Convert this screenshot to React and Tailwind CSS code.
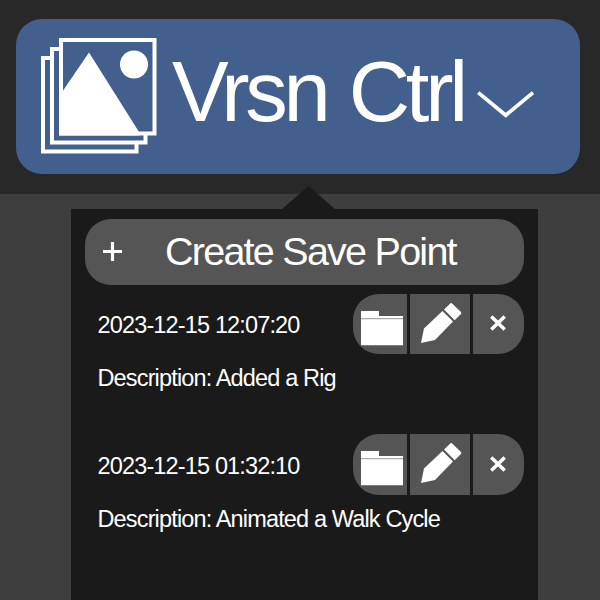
import React from "react";

const savePoints = [
  { time: "2023-12-15 12:07:20", description: "Added a Rig" },
  { time: "2023-12-15 01:32:10", description: "Animated a Walk Cycle" },
];

const GalleryIcon = () => (
  <svg className="h-[116px] w-[116px] shrink-0" viewBox="0 0 116 116" fill="none" stroke="#fff" strokeWidth="4">
    <path d="M10 20H2V113.500H95.500V106" />
    <path d="M19 11H11V104.500H104.500V97" />
    <rect x="20" y="2" width="93.500" height="93.500" />
    <path d="M18 58.500L48 14.500L98 94V97.500H18Z" fill="#fff" stroke="none" />
    <circle cx="93" cy="26.500" r="14" fill="#fff" stroke="none" />
  </svg>
);

const ChevronIcon = () => (
  <svg className="h-7 w-[57px] shrink-0" viewBox="0 0 57 28" fill="none" stroke="#fff" strokeWidth="3.800">
    <path d="M1.300 1.600L28.700 24.300L56 1.600" />
  </svg>
);

const PlusIcon = () => (
  <svg className="h-[19px] w-[19px] shrink-0" viewBox="0 0 19 19" stroke="#fff" strokeWidth="3.200">
    <path d="M0 9.500H19M9.500 0V19" />
  </svg>
);

const FolderIcon = () => (
  <svg className="h-[35px] w-[42px]" viewBox="0 0 42 35">
    <path d="M0 5H42V12H0Z" fill="#aaa" />
    <path d="M0 0H18V5H42V7H0Z" fill="#fff" />
    <path d="M0 8.300H42V34.300H0Z" fill="#fff" />
  </svg>
);

const PencilIcon = () => (
  <svg className="h-[42px] w-[42px]" viewBox="0 0 42 42" fill="#fff">
    <path d="M1 41L4 26.500L22.500 9L33 19.500L15 38Z" />
    <path d="M24 7.500L30 1.700Q31.200 0.500 32.400 1.700L40.700 9.800Q42 11 40.700 12.200L34.700 18.200Z" />
  </svg>
);

const CloseIcon = () => (
  <svg className="h-4 w-4" viewBox="0 0 16 16" stroke="#fff" strokeWidth="3.500">
    <path d="M1.300 1.600L14.700 14.600M14.700 1.600L1.300 14.600" />
  </svg>
);

const Actions = () => (
  <div className="flex h-[60.5px] w-[171px] overflow-hidden rounded-[26px]">
    <button className="flex w-[54px] items-start bg-[#555555] pt-[17px] pl-2">
      <FolderIcon />
    </button>
    <button className="ml-[3px] flex w-[60px] items-start bg-[#555555] pt-2 pl-[10px]">
      <PencilIcon />
    </button>
    <button className="ml-[3px] flex flex-1 items-start bg-[#555555] pt-[21.5px] pl-[16.5px]">
      <CloseIcon />
    </button>
  </div>
);

const SavePoint = ({ time, description }) => (
  <li className="h-[140.5px] text-[23.5px] leading-[28px] tracking-[-0.85px]">
    <div className="flex items-start justify-between">
      <span className="pt-[17.5px] whitespace-nowrap">{time}</span>
      <Actions />
    </div>
    <p className="mt-[10px] whitespace-nowrap">Description: {description}</p>
  </li>
);

export default function App() {
  return (
    <div className="h-[600px] w-[600px] overflow-hidden bg-[#3e3e3e] font-['Liberation_Sans',Arial,sans-serif] text-white">
      <header className="h-[194px] bg-[#282828] pt-[19px] pl-4">
        <button className="flex h-[155px] w-[564px] items-start rounded-[26px] bg-[#435f8d] text-left">
          <span className="pt-[19px] pl-[25px]">
            <GalleryIcon />
          </span>
          <span className="w-[319.5px] shrink-0 pt-[25px] pl-[15px] text-[85px] leading-[96px] tracking-[-4.3px] [word-spacing:3px] whitespace-nowrap">
            Vrsn Ctrl
          </span>
          <span className="pt-[71.5px]">
            <ChevronIcon />
          </span>
        </button>
      </header>

      <div className="relative mt-[15px] ml-[71px] h-[391px] w-[467px] bg-[#1a1a1a] pt-[10px] pl-[14px]">
        <svg className="absolute -top-[23px] left-[211px] h-6 w-[54px]" viewBox="0 0 54 24" fill="#1a1a1a">
          <path d="M0 23L26.500 0L53 23V24H0Z" />
        </svg>
        <button className="flex h-[66px] w-[439px] items-center rounded-[26px] bg-[#555555] pb-[2px] pl-[18px]">
          <PlusIcon />
          <span className="ml-[43px] text-[39.5px] leading-[44px] tracking-[-1.75px] whitespace-nowrap">
            Create Save Point
          </span>
        </button>
        <ul className="mt-[8.5px] w-[439px] pl-[12.5px]">
          {savePoints.map((point) => (
            <SavePoint key={point.time} {...point} />
          ))}
        </ul>
      </div>
    </div>
  );
}
